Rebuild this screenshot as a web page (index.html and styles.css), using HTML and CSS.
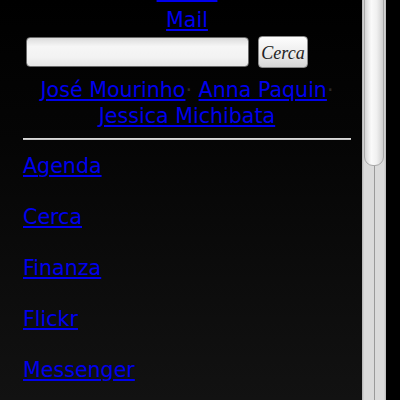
FILE: index.html
```html
<!DOCTYPE html>
<html lang="it">
<head>
    <meta charset="UTF-8">
    <meta name="viewport" content="width=device-width, initial-scale=1.0">
    <title>Yahoo! Mobile</title>
    <link rel="stylesheet" href="styles.css">
</head>
<body>

<div class="screen">
    <main class="page">
        <div class="top-link"><a href="#">Home</a></div>
        <div class="mail-link"><a href="#">Mail</a></div>

        <form class="search" onsubmit="return false">
            <input type="text" class="search-box">
            <button type="submit" class="search-button">Cerca</button>
        </form>

        <div class="trends">
            <a href="#">José Mourinho</a><span class="sep">·</span> <a href="#">Anna Paquin</a><span class="sep">·</span>
            <a href="#">Jessica Michibata</a>
        </div>

        <hr class="divider">

        <ul class="menu">
            <li><a href="#">Agenda</a></li>
            <li><a href="#">Cerca</a></li>
            <li><a href="#">Finanza</a></li>
            <li><a href="#">Flickr</a></li>
            <li><a href="#">Messenger</a></li>
        </ul>
    </main>

    <!-- fake scrollbar -->
    <div class="scrollbar">
        <div class="scroll-line"></div>
        <div class="scroll-thumb"></div>
    </div>
</div>

</body>
</html>
```

FILE: styles.css
```css
html, body {
    margin: 0;
    height: 100%;
    overflow: hidden;
}
body {
    background-color: #000;
    font-family: 'DejaVu Sans', sans-serif;
    font-size: 20.6px;
}
a {
    color: #0000ee;
}
.screen {
    display: flex;
    height: 400px;
}
.page {
    width: 328px;
    padding: 0 11px 0 23px;
    background: linear-gradient(#000 0%, #050505 35%, #121212 100%);
    overflow: hidden;
}
.top-link {
    text-align: center;
    line-height: 26px;
    margin-top: -27px;
}
.top-link a {
    text-underline-offset: 7px;
}
.mail-link {
    text-align: center;
    line-height: 26px;
    margin-top: 8px;
}
.search {
    display: flex;
    align-items: center;
    gap: 9px;
    margin: 3px 0 0 3px;
    height: 32px;
}
.search-box {
    width: 223px;
    height: 30px;
    box-sizing: border-box;
    border: 1px solid #6a6a6a;
    border-radius: 4px;
    background: linear-gradient(#dcdcdc 0%, #f6f6f6 30%, #f2f2f2 70%, #e6e6e6 100%);
    padding: 0 6px;
}
.search-button {
    width: 50px;
    height: 32px;
    border: 1px solid #8a8a8a;
    border-radius: 4px;
    background: linear-gradient(#fdfdfd 0%, #eeeeee 50%, #d6d6d6 100%);
    font-family: 'Liberation Serif', serif;
    font-style: italic;
    font-size: 18px;
    color: #222;
    padding: 2px 0 0 0;
}
.trends {
    text-align: center;
    line-height: 26px;
    margin-top: 9px;
}
.sep {
    color: #2a2a2a;
}
.divider {
    border: 0;
    height: 2px;
    margin: 9px 0 0 0;
    background: linear-gradient(#e4e4e4, #b8b8b8);
}
.menu {
    list-style: none;
    margin: 13px 0 0 0;
    padding: 0;
}
.menu li {
    line-height: 26px;
    margin-bottom: 25px;
}
.scrollbar {
    position: relative;
    width: 24px;
    height: 400px;
    background: linear-gradient(90deg, #b0b0b0 0px, #dadada 2px, #dadada 22px, #b8b8b8 24px);
}
.scroll-line {
    position: absolute;
    left: 12px;
    top: 0;
    width: 1px;
    height: 400px;
    background-color: #9a9a9a;
}
.scroll-thumb {
    position: absolute;
    left: 2px;
    top: -10px;
    width: 18px;
    height: 174px;
    border: 1px solid #a8a8a8;
    border-radius: 0 0 9px 9px;
    background: linear-gradient(90deg, #d4d4d4 0%, #fafafa 35%, #f0f0f0 65%, #cfcfcf 100%);
}
```
